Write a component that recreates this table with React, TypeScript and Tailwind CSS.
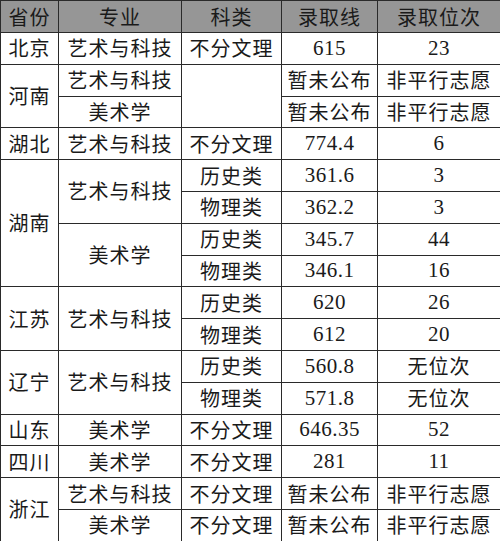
import React from "react"

type Cell = { text: string; rowSpan?: number; num?: boolean }

const rows: Cell[][] = [
  [{ text: "北京" }, { text: "艺术与科技" }, { text: "不分文理" }, { text: "615", num: true }, { text: "23", num: true }],
  [{ text: "河南", rowSpan: 2 }, { text: "艺术与科技" }, { text: "", rowSpan: 2 }, { text: "暂未公布" }, { text: "非平行志愿" }],
  [{ text: "美术学" }, { text: "暂未公布" }, { text: "非平行志愿" }],
  [{ text: "湖北" }, { text: "艺术与科技" }, { text: "不分文理" }, { text: "774.4", num: true }, { text: "6", num: true }],
  [{ text: "湖南", rowSpan: 4 }, { text: "艺术与科技", rowSpan: 2 }, { text: "历史类" }, { text: "361.6", num: true }, { text: "3", num: true }],
  [{ text: "物理类" }, { text: "362.2", num: true }, { text: "3", num: true }],
  [{ text: "美术学", rowSpan: 2 }, { text: "历史类" }, { text: "345.7", num: true }, { text: "44", num: true }],
  [{ text: "物理类" }, { text: "346.1", num: true }, { text: "16", num: true }],
  [{ text: "江苏", rowSpan: 2 }, { text: "艺术与科技", rowSpan: 2 }, { text: "历史类" }, { text: "620", num: true }, { text: "26", num: true }],
  [{ text: "物理类" }, { text: "612", num: true }, { text: "20", num: true }],
  [{ text: "辽宁", rowSpan: 2 }, { text: "艺术与科技", rowSpan: 2 }, { text: "历史类" }, { text: "560.8", num: true }, { text: "无位次" }],
  [{ text: "物理类" }, { text: "571.8", num: true }, { text: "无位次" }],
  [{ text: "山东" }, { text: "美术学" }, { text: "不分文理" }, { text: "646.35", num: true }, { text: "52", num: true }],
  [{ text: "四川" }, { text: "美术学" }, { text: "不分文理" }, { text: "281", num: true }, { text: "11", num: true }],
  [{ text: "浙江", rowSpan: 2 }, { text: "艺术与科技" }, { text: "不分文理" }, { text: "暂未公布" }, { text: "非平行志愿" }],
  [{ text: "美术学" }, { text: "不分文理" }, { text: "暂未公布" }, { text: "非平行志愿" }],
]

const headers = ["省份", "专业", "科类", "录取线", "录取位次"]

export default function App() {
  return (
    <div className="w-[500px] h-[541px] bg-white overflow-hidden">
      <table
        className="w-[500px] table-fixed border-collapse text-[20px] text-[#1a1a1a] leading-none"
        style={{ fontFamily: '"Noto Sans CJK SC", sans-serif' }}
      >
        <colgroup>
          <col className="w-[58px]" />
          <col className="w-[123px]" />
          <col className="w-[100px]" />
          <col className="w-[96px]" />
          <col className="w-[123px]" />
        </colgroup>
        <thead>
          <tr className="h-[32px] bg-[#969696]">
            {headers.map((h) => (
              <th key={h} className="border-[1.5px] border-[#2a2a2a] font-normal text-center tracking-[1px] p-0">
                {h}
              </th>
            ))}
          </tr>
        </thead>
        <tbody>
          {rows.map((row, i) => (
            <tr key={i} className="h-[31.8px]">
              {row.map((c, j) => (
                <td
                  key={j}
                  rowSpan={c.rowSpan}
                  className={
                    c.num
                      ? "border-[1.5px] border-[#2a2a2a] text-center p-0 text-[21px] font-['Liberation_Serif',serif] tracking-[0.5px]"
                      : "border-[1.5px] border-[#2a2a2a] text-center p-0 tracking-[1px] whitespace-nowrap"
                  }
                >
                  {c.text}
                </td>
              ))}
            </tr>
          ))}
        </tbody>
      </table>
    </div>
  )
}
